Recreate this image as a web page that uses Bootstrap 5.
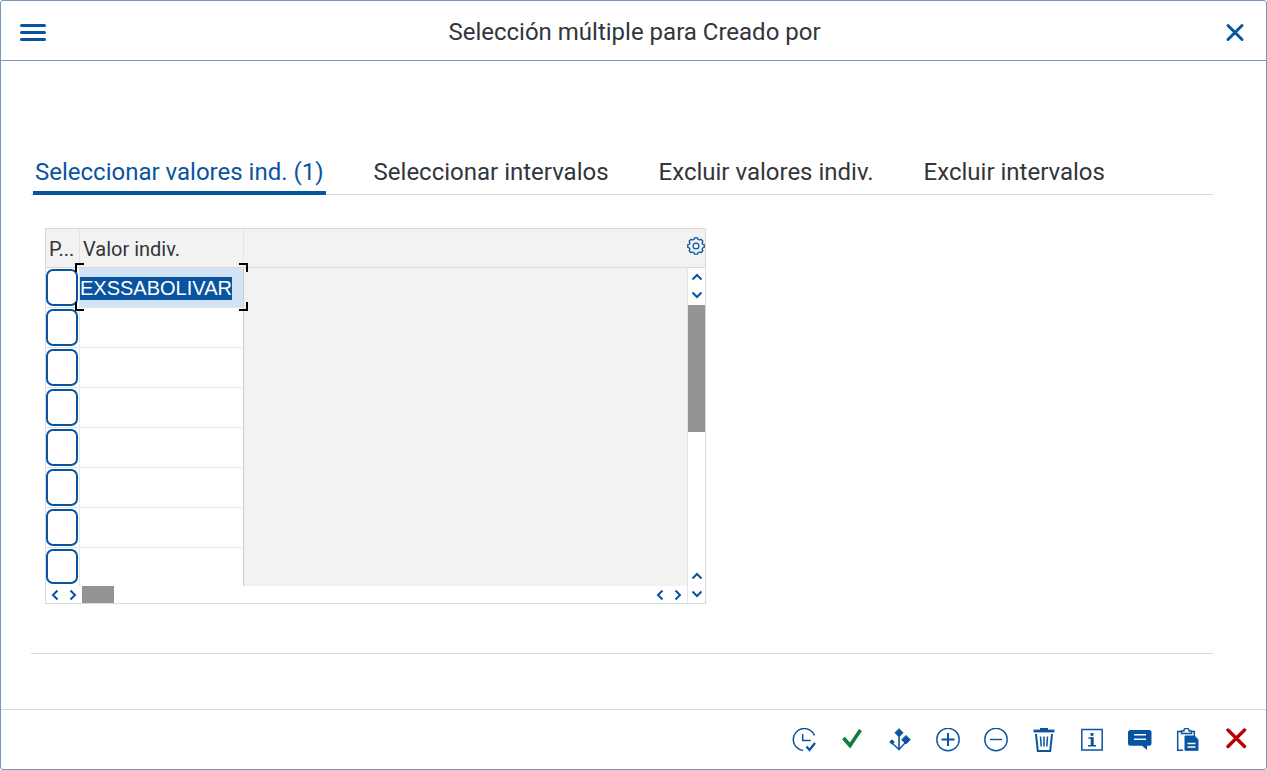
<!DOCTYPE html>
<html lang="es">
<head>
<meta charset="utf-8">
<meta name="viewport" content="width=device-width, initial-scale=1">
<title>Selección múltiple para Creado por</title>
<link href="https://cdn.jsdelivr.net/npm/bootstrap@5.3.0/dist/css/bootstrap.min.css" rel="stylesheet">
<style>
  :root { --brand: #0854a0; --ink: #32363a; --frame: #7a97b8; --rule: #d9d9d9; --soft: #f2f2f2; }
  body { font-family: Roboto, "Liberation Sans", sans-serif; color: var(--ink); font-size: 20px; }
  svg { display: block; }
  .dialog { border: 1px solid var(--frame); border-radius: 3px; }
  .dialog-head { height: 60px; border-bottom: 1px solid var(--frame); padding: 2px 19px 0; }
  .dialog-title { font-size: 24px; line-height: 28px; font-weight: 400; }
  .tool { border: 0; background: none; padding: 0; color: var(--brand); }
  .dialog-main { padding: 93px 53px 0 30px; }
  .tabs { border-bottom: 1px solid var(--rule); gap: 46px; padding: 0 2px; }
  .tabs .nav-link { font-size: 24px; line-height: 28px; padding: 4px 2px 5px; color: var(--ink); border-bottom: 4px solid transparent; margin-bottom: -1px; }
  .tabs .nav-link.active { color: var(--brand); border-color: var(--brand); }
  .values { margin: 33px 0 0 14px; max-width: 661px; border: 1px solid var(--rule); }
  .values table { table-layout: fixed; border-collapse: separate; border-spacing: 0; width: 100%; }
  .values th { height: 39px; font-weight: 400; background: var(--soft); border-bottom: 1px solid var(--rule); border-right: 1px solid #e5e5e5; padding: 2px 3px 0; line-height: 24px; overflow: hidden; white-space: nowrap; text-overflow: ellipsis; }
  .values th:last-child { border-right: 0; }
  .values td { height: 40px; padding: 0; border-bottom: 1px solid #e5e5e5; border-right: 1px solid #e5e5e5; vertical-align: top; }
  .values td.value { border-right-color: #ccc; position: relative; }
  .values td.empty { background: var(--soft); border: 0; }
  .values tr:last-child td { height: 38px; border-bottom: 0; }
  .col-pick { width: 34px; }
  .col-value { width: 164px; }
  .pick { display: block; width: 32px; height: 37px; margin-top: 1px; border: 2px solid var(--brand); border-radius: 7px; background: #fff; padding: 0; }
  tr:last-child .pick { height: 35px; }
  .value input { display: block; width: 100%; height: 39px; border: 0; outline: 0; padding: 1px 0 0; background: transparent; color: var(--ink); font-family: "Liberation Sans", sans-serif; line-height: 23px; }
  tr:last-child .value input { height: 38px; }
  .value.current input { background: #d1e4f5; }
  .value input::selection { background: var(--brand); color: #fff; }
  .corners { position: absolute; inset: -5px -5px -4px; pointer-events: none; z-index: 1; }
  .corners i { position: absolute; width: 9px; height: 9px; border: 0 solid #000; }
  .corners i:nth-child(1) { left: 0; top: 0; border-width: 2px 0 0 2px; }
  .corners i:nth-child(2) { right: 0; top: 0; border-width: 2px 2px 0 0; }
  .corners i:nth-child(3) { left: 0; bottom: 0; border-width: 0 0 2px 2px; }
  .corners i:nth-child(4) { right: 0; bottom: 0; border-width: 0 2px 2px 0; }
  .hbar { height: 17px; }
  .vbar { width: 18px; flex: none; }
  .vbar-head { height: 39px; background: var(--soft); border-bottom: 1px solid var(--rule); }
  .vbar-track { border-left: 1px solid #e5e5e5; }
  .step { width: 18px; height: 17px; display: flex; align-items: center; justify-content: center; }
  .vbar .step { width: 17px; height: 18px; }
  .thumb-h { width: 32px; height: 17px; background: #949494; }
  .thumb-v { height: 127px; width: 17px; margin-top: 1px; background: #949494; }
  .end-rule { border-top: 1px solid var(--rule); margin: 49px 0 0; opacity: 1; }
  .dialog-foot { border-top: 1px solid var(--rule); height: 60px; padding: 0 18px; gap: 24px; }
</style>
</head>
<body>
<svg class="d-none" aria-hidden="true">
  <defs>
    <symbol id="left" viewBox="0 0 12 12"><path d="M8.500 1.500 4 6l4.500 4.500" fill="none" stroke="#0854a0" stroke-width="2"/></symbol>
    <symbol id="right" viewBox="0 0 12 12"><path d="M3.500 1.500 8 6l-4.500 4.500" fill="none" stroke="#0854a0" stroke-width="2"/></symbol>
    <symbol id="up" viewBox="0 0 12 12"><path d="M1.500 8.500 6 4l4.500 4.500" fill="none" stroke="#0854a0" stroke-width="2"/></symbol>
    <symbol id="down" viewBox="0 0 12 12"><path d="M1.500 3.500 6 8l4.500-4.500" fill="none" stroke="#0854a0" stroke-width="2"/></symbol>
  </defs>
</svg>
<div class="dialog min-vh-100 d-flex flex-column bg-white">
  <header class="dialog-head d-flex align-items-center justify-content-between">
    <button class="tool" type="button" aria-label="Menú">
      <svg width="26" height="24" viewBox="0 0 26 24"><path d="M1.500 5.500h23M1.500 12.500h23M1.500 19.500h23" stroke="currentColor" stroke-width="3" stroke-linecap="round"/></svg>
    </button>
    <h1 class="dialog-title m-0">Selección múltiple para Creado por</h1>
    <button class="tool" type="button" aria-label="Cerrar">
      <svg width="24" height="24" viewBox="0 0 24 24"><path d="m5 5.500 14 14M19 5.500l-14 14" stroke="currentColor" stroke-width="3" stroke-linecap="round"/></svg>
    </button>
  </header>

  <main class="dialog-main flex-grow-1">
    <nav class="tabs nav">
      <a class="nav-link active" href="#valores" aria-current="page">Seleccionar valores ind. (1)</a>
      <a class="nav-link" href="#intervalos">Seleccionar intervalos</a>
      <a class="nav-link" href="#excluir-valores">Excluir valores indiv.</a>
      <a class="nav-link" href="#excluir-intervalos">Excluir intervalos</a>
    </nav>

    <section class="values d-flex" id="valores">
      <div class="flex-grow-1">
        <table>
          <colgroup><col class="col-pick"><col class="col-value"><col></colgroup>
          <thead><tr><th scope="col">P...</th><th scope="col">Valor indiv.</th><th></th></tr></thead>
          <tbody>
            <tr>
              <td><button class="pick" type="button" aria-label="Fila 1"></button></td>
              <td class="value current"><input id="current" type="text" value="EXSSABOLIVAR" aria-label="Valor 1"><span class="corners"><i></i><i></i><i></i><i></i></span></td>
              <td class="empty" rowspan="8"></td>
            </tr>
            <tr><td><button class="pick" type="button" aria-label="Fila 2"></button></td><td class="value"><input type="text" aria-label="Valor 2"></td></tr>
            <tr><td><button class="pick" type="button" aria-label="Fila 3"></button></td><td class="value"><input type="text" aria-label="Valor 3"></td></tr>
            <tr><td><button class="pick" type="button" aria-label="Fila 4"></button></td><td class="value"><input type="text" aria-label="Valor 4"></td></tr>
            <tr><td><button class="pick" type="button" aria-label="Fila 5"></button></td><td class="value"><input type="text" aria-label="Valor 5"></td></tr>
            <tr><td><button class="pick" type="button" aria-label="Fila 6"></button></td><td class="value"><input type="text" aria-label="Valor 6"></td></tr>
            <tr><td><button class="pick" type="button" aria-label="Fila 7"></button></td><td class="value"><input type="text" aria-label="Valor 7"></td></tr>
            <tr><td><button class="pick" type="button" aria-label="Fila 8"></button></td><td class="value"><input type="text" aria-label="Valor 8"></td></tr>
          </tbody>
        </table>
        <div class="hbar d-flex align-items-center">
          <button class="tool step" type="button" aria-label="Izquierda"><svg width="12" height="12"><use href="#left"/></svg></button>
          <button class="tool step" type="button" aria-label="Derecha"><svg width="12" height="12"><use href="#right"/></svg></button>
          <div class="thumb-h"></div>
          <button class="tool step ms-auto" type="button" aria-label="Columna anterior"><svg width="12" height="12"><use href="#left"/></svg></button>
          <button class="tool step" type="button" aria-label="Columna siguiente"><svg width="12" height="12"><use href="#right"/></svg></button>
        </div>
      </div>
      <div class="vbar d-flex flex-column">
        <div class="vbar-head">
          <button class="tool pt-2" type="button" aria-label="Configuración">
            <svg width="18" height="18" viewBox="0 0 18 18" fill="none" stroke="currentColor"><circle cx="9" cy="9" r="2.900" stroke-width="1.200"/><path stroke-width="1.300" stroke-linejoin="round" d="M7.500 .8h3l.6 1.700 1.100.5 1.700-.7 1.900 1.900-.7 1.700.5 1.100 1.600.6v2.800l-1.600.6-.5 1.100.7 1.700-1.900 1.900-1.700-.7-1.100.5-.6 1.700h-3l-.6-1.700-1.100-.5-1.700.7-1.900-1.900.7-1.700-.5-1.100-1.600-.6V7.600L2.400 7l.5-1.100-.7-1.700 1.900-1.900 1.700.7 1.100-.5z"/></svg>
          </button>
        </div>
        <div class="vbar-track d-flex flex-column flex-grow-1">
          <button class="tool step" type="button" aria-label="Arriba"><svg width="12" height="12"><use href="#up"/></svg></button>
          <button class="tool step" type="button" aria-label="Abajo"><svg width="12" height="12"><use href="#down"/></svg></button>
          <div class="thumb-v"></div>
          <button class="tool step mt-auto" type="button" aria-label="Fila anterior"><svg width="12" height="12"><use href="#up"/></svg></button>
          <button class="tool step" type="button" aria-label="Fila siguiente"><svg width="12" height="12"><use href="#down"/></svg></button>
        </div>
      </div>
    </section>
    <hr class="end-rule">
  </main>

  <footer class="dialog-foot d-flex align-items-center justify-content-end">
    <button class="tool" type="button" aria-label="Ejecutar"><svg width="24" height="24" viewBox="0 0 24 24" fill="none" stroke="currentColor" stroke-width="1.500"><path d="M22.500 7.500A11 11 0 1 0 11 22.500"/><path d="M10.700 6v6.500h8"/><path d="m14.500 18.500 3 3.500 5.500-7" stroke-width="2.200"/></svg></button>
    <button class="tool" type="button" aria-label="Verificar"><svg width="24" height="24" viewBox="0 0 24 24" fill="none"><path d="m3.500 10 6.500 7.500L20.500 2" stroke="#107e3e" stroke-width="3.600"/></svg></button>
    <button class="tool" type="button" aria-label="Opciones de selección"><svg width="24" height="24" viewBox="0 0 24 24"><g fill="currentColor" stroke="currentColor" stroke-linejoin="round"><path d="m11 .7 4 4-4 4-4-4zM18 7.500l4.300 4.200-4.300 4.200-4.300-4.200zM4 11.800l2.300 2.200L4 16.200 1.700 14z"/></g><path d="M11 8v13.500" fill="none" stroke="currentColor" stroke-width="1.600"/><path d="m4 15 7 6.500 6.500-7" fill="none" stroke="currentColor" stroke-width="1.400"/></svg></button>
    <button class="tool" type="button" aria-label="Insertar fila"><svg width="24" height="24" viewBox="0 0 24 24" fill="none" stroke="currentColor" stroke-width="1.400"><circle cx="12" cy="11.500" r="11.200"/><path d="M12 5v13M5.500 11.500h13" stroke-width="2"/></svg></button>
    <button class="tool" type="button" aria-label="Borrar fila"><svg width="24" height="24" viewBox="0 0 24 24" fill="none" stroke="currentColor" stroke-width="1.400"><circle cx="12" cy="11.500" r="11.200"/><path d="M6 11.500h12"/></svg></button>
    <button class="tool" type="button" aria-label="Borrar todo"><svg width="24" height="24" viewBox="0 0 24 24" fill="none" stroke="currentColor"><path d="M8 1h8" stroke-width="2"/><path d="M1.500 3h21" stroke-width="2.800"/><path d="m4 6 1.800 17h12.400L20 6" stroke-width="2"/><path d="m8.500 8.500.7 10M12 8.500v10M15.500 8.500l-.7 10" stroke-width="1.500"/></svg></button>
    <button class="tool" type="button" aria-label="Información"><svg width="24" height="24" viewBox="0 0 24 24" fill="none" stroke="currentColor"><path d="M1.800 1.500h20.400v20.500H1.800z" stroke-width="1.500"/><path d="M10.500 5h3v2.800h-3z" fill="currentColor" stroke="none"/><path d="M8.500 10h3.500v8M8 17.700h8" stroke-width="1.500"/><path d="M12.200 9.300V18" stroke-width="3"/></svg></button>
    <button class="tool" type="button" aria-label="Ayuda"><svg width="24" height="24" viewBox="0 0 24 24"><path d="M2.500 2h18.500Q23.500 2 23.500 4.500v10.700q0 2.500-2.500 2.500H19V22l-5-4.300H2.500Q0 17.700 0 15.200V4.500Q0 2 2.500 2z" fill="currentColor"/><path d="M6 6.800h12M6 11.300h12" stroke="#fff" stroke-width="1.400"/></svg></button>
    <button class="tool" type="button" aria-label="Pegar desde portapapeles"><svg width="24" height="24" viewBox="0 0 24 24" fill="none" stroke="currentColor" stroke-width="1.500"><path d="M6 3.500H1.700v18.800H7M15 3.500h3.300V8M5.500 5.500h10V3h-2.300a2.700 2.700 0 0 0-5.400 0H5.500z"/><path d="M9 8h9.500l3.500 3.500v10.800H9z" fill="currentColor" stroke-width="1"/><path d="M11.500 15.500h8M11.500 19h8" stroke="#fff" stroke-width="1.300"/></svg></button>
    <button class="tool" type="button" aria-label="Cancelar"><svg width="24" height="24" viewBox="0 0 24 24"><path d="m4 2 16.500 16.500M20.500 2 4 18.500" stroke="#b00" stroke-width="3.400" stroke-linecap="round"/></svg></button>
  </footer>
</div>
<script src="https://cdn.jsdelivr.net/npm/bootstrap@5.3.0/dist/js/bootstrap.bundle.min.js"></script>
<script>
  const current = document.getElementById('current');
  current.focus();
  current.select();
</script>
</body>
</html>
